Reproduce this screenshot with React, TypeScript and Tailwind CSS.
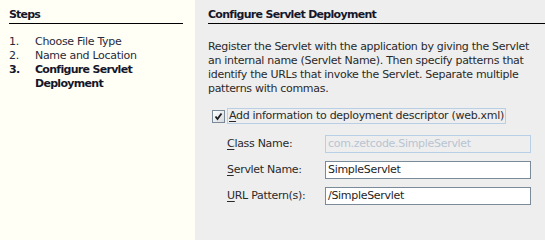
import React from 'react'

const font = { fontFamily: '"DejaVu Sans", "Noto Sans", sans-serif' }

function Field({ label, mn, value, disabled }: { label: string; mn: string; value: string; disabled?: boolean }) {
  const rest = label.slice(mn.length)
  return (
    <div className="flex items-center">
      <div className="w-[99px] pl-[1px] text-[#2a2a2a]">
        <span className="underline underline-offset-[2px]">{mn}</span>
        {rest}
      </div>
      <div
        className={
          disabled
            ? 'flex h-[18px] w-[206px] items-center border border-[#b8cfe5] bg-[#eeeeee] px-[2px] text-[#b8c4d2]'
            : 'flex h-[18px] w-[206px] items-center border border-[#7a8a99] bg-white px-[2px] text-[#1e1e1e]'
        }
      >
        {value}
      </div>
    </div>
  )
}

export default function App() {
  return (
    <div className="flex h-[212px] min-h-screen w-[545px] overflow-hidden text-[11px] leading-[14px] tracking-[-0.3px]" style={font}>
      {/* steps panel */}
      <div className="w-[195px] shrink-0 bg-[#fffff6] pl-[9px] pr-[12px] pt-[8px]">
        <div className="border-b border-black pb-[1px] font-bold tracking-[-0.8px] text-[#16162a]">Steps</div>
        <ol className="mt-[11px] text-[#2a2a3a]">
          <li className="flex">
            <span className="w-[26px]">1.</span>
            <span>Choose File Type</span>
          </li>
          <li className="flex">
            <span className="w-[26px]">2.</span>
            <span>Name and Location</span>
          </li>
          <li className="flex font-bold tracking-[-0.7px] text-[#16162a]">
            <span className="w-[26px]">3.</span>
            <span>
              Configure Servlet
              <br />
              Deployment
            </span>
          </li>
        </ol>
      </div>

      {/* content panel */}
      <div className="flex-1 bg-[#eeeeee] pl-[13px] pt-[8px]">
        <div className="border-b border-black pb-[1px] font-bold tracking-[-0.7px] text-[#16162a]">
          Configure Servlet Deployment
        </div>
        <p className="mt-[16px] text-[#2a2a2a]">
          Register the Servlet with the application by giving the Servlet
          <br />
          an internal name (Servlet Name). Then specify patterns that
          <br />
          identify the URLs that invoke the Servlet. Separate multiple
          <br />
          patterns with commas.
        </p>

        <div className="mt-[12px] flex items-center pl-[4px]">
          <div className="flex h-[13px] w-[13px] items-center justify-center border border-[#7a8a99] bg-gradient-to-br from-white to-[#d5dbe2]">
            <svg width="9" height="9" viewBox="0 0 9 9">
              <path d="M1.5 4.5 L3.5 7 L7.5 1.5" fill="none" stroke="#1e1e1e" strokeWidth="1.8" />
            </svg>
          </div>
          <div className="ml-[2px] border border-[#b8cfe5] px-[1px] text-[#2a2a2a]">
            <span className="underline underline-offset-[2px]">A</span>dd information to deployment descriptor (web.xml)
          </div>
        </div>

        <div className="mt-[11px] flex flex-col gap-[8px] pl-[18px]">
          <Field label="Class Name:" mn="C" value="com.zetcode.SimpleServlet" disabled />
          <Field label="Servlet Name:" mn="S" value="SimpleServlet" />
          <Field label="URL Pattern(s):" mn="U" value="/SimpleServlet" />
        </div>
      </div>
    </div>
  )
}
